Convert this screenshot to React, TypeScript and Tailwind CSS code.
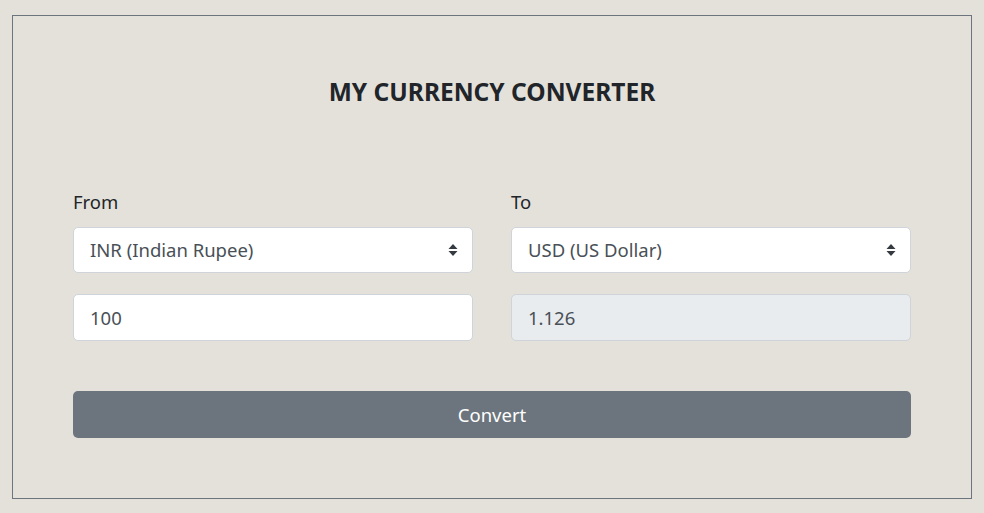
import React, { useState } from 'react';

const currencies = [
  { code: 'INR', name: 'Indian Rupee' },
  { code: 'USD', name: 'US Dollar' },
  { code: 'EUR', name: 'Euro' },
  { code: 'GBP', name: 'British Pound' },
];

// Small up/down caret drawn like the native bootstrap select arrow
function Caret() {
  return (
    <svg
      className="pointer-events-none absolute right-[15px] top-1/2 -translate-y-1/2"
      width="10"
      height="14"
      viewBox="0 0 10 14"
      fill="#343a40"
    >
      <path d="M5 1 L9.5 6 H0.5 Z" />
      <path d="M5 13 L9.5 8 H0.5 Z" />
    </svg>
  );
}

function CurrencySelect({ value, onChange }: { value: string; onChange: (v: string) => void }) {
  return (
    <div className="relative">
      <select
        value={value}
        onChange={(e) => onChange(e.target.value)}
        className="block h-[46px] w-full appearance-none rounded-[5px] border border-[#ced4da] bg-white px-4 text-[18.5px] text-[#495057] outline-none"
      >
        {currencies.map((c) => (
          <option key={c.code} value={c.code}>
            {c.code} ({c.name})
          </option>
        ))}
      </select>
      <Caret />
    </div>
  );
}

export default function App() {
  const [from, setFrom] = useState('INR');
  const [to, setTo] = useState('USD');
  const [amount, setAmount] = useState('100');

  return (
    <div
      className="min-h-screen bg-[#e4e1da] px-3 pt-[15px] text-[#212529]"
      style={{ fontFamily: '"Noto Sans", "Open Sans", sans-serif' }}
    >
      <div className="border border-[#6c757d] px-[60px] pb-[60px] pt-[58px]">
        <h1 className="text-center text-[24.5px] font-bold leading-[36px]">MY CURRENCY CONVERTER</h1>

        <div className="mt-[78px] grid grid-cols-2 gap-x-[38px]">
          <div>
            <label className="block text-[18.5px] leading-[27px]">From</label>
            <div className="mt-[12px]">
              <CurrencySelect value={from} onChange={setFrom} />
            </div>
            <input
              value={amount}
              onChange={(e) => setAmount(e.target.value)}
              className="mt-[21px] block h-[47px] w-full rounded-[5px] border border-[#ced4da] bg-white px-4 text-[18.5px] text-[#495057] outline-none"
            />
          </div>
          <div>
            <label className="block text-[18.5px] leading-[27px]">To</label>
            <div className="mt-[12px]">
              <CurrencySelect value={to} onChange={setTo} />
            </div>
            <input
              value="1.126"
              disabled
              readOnly
              className="mt-[21px] block h-[47px] w-full rounded-[5px] border border-[#ced4da] bg-[#e9ecef] px-4 text-[18.5px] text-[#495057] outline-none"
            />
          </div>
        </div>

        <button
          type="button"
          className="mt-[50px] block h-[47px] w-full rounded-[5px] bg-[#6c757d] text-[18.5px] text-white"
        >
          Convert
        </button>
      </div>
    </div>
  );
}
